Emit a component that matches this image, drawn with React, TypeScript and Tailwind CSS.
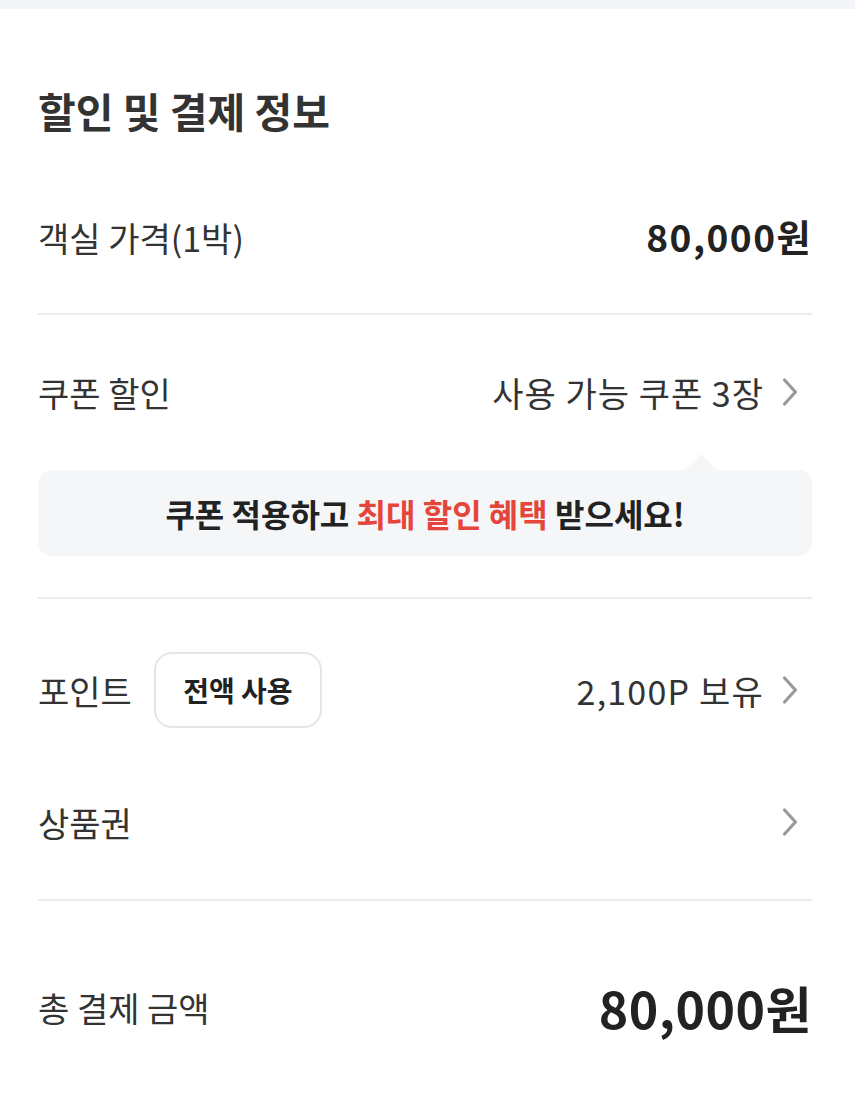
import React from "react"

const font = { fontFamily: '"Noto Sans CJK KR", "Noto Sans", sans-serif' }

function Chevron() {
  return (
    <svg width="16" height="30" viewBox="0 0 16 30" fill="none" className="ml-[18px] mr-[14px]">
      <path d="M2.5 3 L13.5 15 L2.5 27" stroke="#999999" strokeWidth="3.2" strokeLinecap="round" strokeLinejoin="round" />
    </svg>
  )
}

function Row({ label, children }: { label: React.ReactNode; children?: React.ReactNode }) {
  return (
    <div className="flex items-center justify-between h-[40px]">
      <div className="flex items-center text-[34px] text-[#333]">{label}</div>
      <div className="flex items-center text-[34px] text-[#333] tracking-[1px]">{children}</div>
    </div>
  )
}

export default function App() {
  return (
    <div className="w-[855px] h-[1100px] bg-white" style={font}>
      <div className="h-[9px] bg-[#f3f5f8]" />
      <div className="pl-[38px] pr-[43px]">
        <h2 className="pt-[76px] text-[41px] font-bold text-[#333] leading-[50px]">할인 및 결제 정보</h2>

        <div className="pt-[82px] pb-[56px] border-b-2 border-[#ececec]">
          <Row label="객실 가격(1박)">
            <span className="font-bold text-[37px] tracking-[1.5px] text-[#222]">80,000원</span>
          </Row>
        </div>

        <div className="pt-[57px] pb-[41px] border-b-2 border-[#ececec]">
          <Row label="쿠폰 할인">
            사용 가능 쿠폰 3장
            <Chevron />
          </Row>
          <div className="relative mt-[58px] rounded-[14px] bg-[#f4f6f8] h-[86px] flex items-center justify-center text-[32px] font-bold text-[#222]">
            <div className="absolute -top-[16px] right-[94px] w-0 h-0 border-l-[17px] border-r-[17px] border-b-[17px] border-l-transparent border-r-transparent border-b-[#f4f6f8]" />
            <span>
              쿠폰 적용하고 <span className="text-[#e5453b]">최대 할인 혜택</span> 받으세요!
            </span>
          </div>
        </div>

        <div className="pt-[53px] pb-[57px] border-b-2 border-[#ececec] flex flex-col gap-[74px]">
          <div className="flex items-center justify-between h-[76px]">
            <div className="flex items-center text-[34px] text-[#333]">
              포인트
              <button className="ml-[22px] w-[168px] h-[76px] rounded-[18px] border-2 border-[#e6e6e6] bg-white text-[28px] font-bold text-[#222]">
                전액 사용
              </button>
            </div>
            <div className="flex items-center text-[34px] text-[#333] tracking-[1.2px]">
              2,100P 보유
              <Chevron />
            </div>
          </div>
          <Row label="상품권">
            <Chevron />
          </Row>
        </div>

        <div className="pt-[78px] flex items-center justify-between h-[134px]">
          <span className="text-[34px] text-[#333]">총 결제 금액</span>
          <span className="text-[50px] font-bold text-[#222] tracking-[0.5px]">80,000원</span>
        </div>
      </div>
    </div>
  )
}
